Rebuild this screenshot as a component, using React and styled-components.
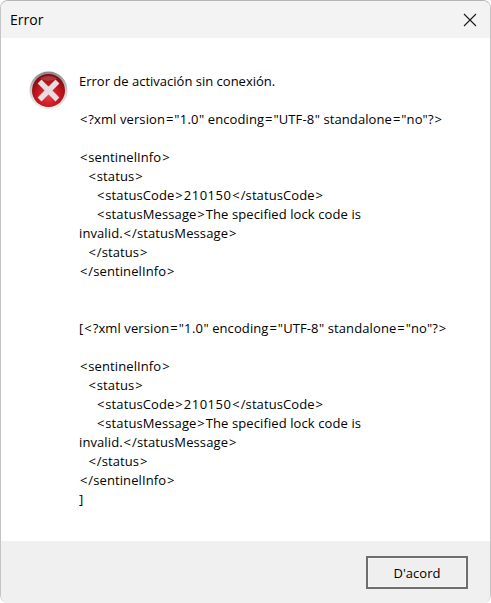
import styled, { createGlobalStyle } from 'styled-components'

const xmlBlock = [
  [0, '<sentinelInfo>'],
  [1, '<status>'],
  [2, '<statusCode>210150</statusCode>'],
  [2, '<statusMessage>The specified lock code is'],
  [0, 'invalid.</statusMessage>'],
  [1, '</status>'],
  [0, '</sentinelInfo>'],
]

const xmlHeader = '<?xml version="1.0" encoding="UTF-8" standalone="no"?>'

const lines = [
  [0, xmlHeader],
  [0, ''],
  ...xmlBlock,
  [0, ''],
  [0, ''],
  [0, '[' + xmlHeader],
  [0, ''],
  ...xmlBlock,
  [0, ']'],
]

// the dialog font draws < > = and digits wider than the ones we have
function spaced(text) {
  return text.split(/([<>=]|[0-9]+)/).map((part, i) => {
    if (/^[<>=]$/.test(part)) return <Operator key={i}>{part}</Operator>
    if (/^[0-9]+$/.test(part)) return <Digits key={i}>{part}</Digits>
    return part
  })
}

function ErrorIcon() {
  return (
    <svg width="39" height="39" viewBox="0 0 39 39">
      <defs>
        <radialGradient id="red" cx="50%" cy="66%" r="62%">
          <stop offset="0%" stopColor="#e4404a" />
          <stop offset="55%" stopColor="#c9151f" />
          <stop offset="100%" stopColor="#860a12" />
        </radialGradient>
        <linearGradient id="ring" x1="0" y1="0" x2="0" y2="1">
          <stop offset="0%" stopColor="#868686" />
          <stop offset="50%" stopColor="#cdcdcd" />
          <stop offset="100%" stopColor="#f4f4f4" />
        </linearGradient>
      </defs>
      <circle cx="19.5" cy="19.5" r="19" fill="url(#ring)" />
      <circle cx="19.5" cy="19.5" r="16.5" fill="url(#red)" />
      <path d="M11 7.5 A14.5 14.5 0 0 1 28 7.5 Q19.5 12 11 7.5 Z" fill="#ffffff" opacity="0.18" />
      <path d="M12.5 12.5 L26.5 26.5 M26.5 12.5 L12.5 26.5" stroke="#e6dfdf" strokeWidth="5.5" strokeLinecap="square" />
    </svg>
  )
}

function App() {
  return (
    <>
      <GlobalStyle />
      <Dialog>
        <TitleBar>
          <Title>Error</Title>
          <CloseIcon width="14" height="14" viewBox="0 0 14 14">
            <path d="M1 1 L13 13 M13 1 L1 13" stroke="#1a1a1a" strokeWidth="1.1" fill="none" />
          </CloseIcon>
        </TitleBar>
        <Content>
          <IconSlot>
            <ErrorIcon />
          </IconSlot>
          <MessageColumn>
            <Lead>Error de activación sin conexión.</Lead>
            <Line />
            {lines.map(([indent, text], i) => (
              <Line key={i} $indent={indent}>{spaced(text)}</Line>
            ))}
          </MessageColumn>
        </Content>
        <Footer>
          <OkButton>D'acord</OkButton>
        </Footer>
      </Dialog>
    </>
  )
}

const GlobalStyle = createGlobalStyle`
  html, body {
    margin: 0;
    padding: 0;
    background: #ffffff;
  }
`

const Dialog = styled.div`
  width: 491px;
  height: 603px;
  box-sizing: border-box;
  display: flex;
  flex-direction: column;
  overflow: hidden;
  border-radius: 8px;
  border-top: 1px solid #b4b4b4;
  border-left: 1px solid #c4c4c4;
  border-right: 1px solid #c4c4c4;
  background: #ffffff;
  font-family: "Open Sans", "Noto Sans", sans-serif;
  color: #000000;
`

const TitleBar = styled.div`
  height: 37px;
  flex-shrink: 0;
  display: flex;
  align-items: center;
  justify-content: space-between;
  padding: 0 13px 0 9px;
  background: #f3f3f3;
`

const Title = styled.div`
  font-size: 14px;
`

const CloseIcon = styled.svg`
  display: block;
`

const Content = styled.div`
  flex: 1;
  display: flex;
  gap: 11px;
  padding: 33px 0 0 28px;
`

const IconSlot = styled.div`
  width: 39px;
  flex-shrink: 0;
`

const MessageColumn = styled.div`
  width: 400px;
  padding-top: 1px;
`

const Line = styled.div`
  min-height: 19px;
  padding-left: ${(p) => (p.$indent || 0) * 8.5}px;
  font-size: 13px;
  line-height: 19px;
  white-space: pre;
  letter-spacing: 0.1px;
`

const Lead = styled(Line)`
  letter-spacing: 0;
`

const Operator = styled.span`
  padding: 0 0.9px;
`

const Digits = styled.span`
  letter-spacing: 0.5px;
`

const Footer = styled.div`
  height: 62px;
  flex-shrink: 0;
  box-sizing: border-box;
  display: flex;
  justify-content: flex-end;
  padding: 15px 22px 0 0;
  background: #f0f0f0;
`

const OkButton = styled.button`
  width: 102px;
  height: 33px;
  box-sizing: border-box;
  border: 2px solid #6e6e6e;
  outline: 1px solid #f6f6f6;
  outline-offset: -3px;
  border-radius: 0;
  background: #efefef;
  color: #000000;
  font-family: "Open Sans", "Noto Sans", sans-serif;
  font-size: 13px;
  padding: 0;
`

export default App
